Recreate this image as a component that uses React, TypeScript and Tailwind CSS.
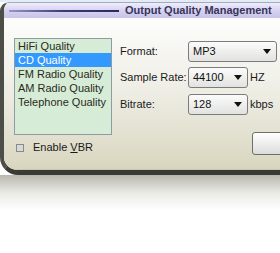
import React from "react";

const Arrow = () => (
  <svg width="8" height="5" viewBox="0 0 8 5" className="shrink-0">
    <path d="M0 0 L8 0 L4 5 Z" fill="#111" />
  </svg>
);

const Drop = ({ value, w }: { value: string; w: string }) => (
  <div
    className={`${w} h-[21px] flex items-center justify-between pl-[4px] pr-[5px] rounded-[3px] border border-[#7c7c7c] bg-gradient-to-b from-[#fbfbfb] to-[#e2e2e0] text-[11px] text-[#111]`}
  >
    <span>{value}</span>
    <Arrow />
  </div>
);

export default function App() {
  const items = ["HiFi Quality", "CD Quality", "FM Radio Quality", "AM Radio Quality", "Telephone Quality"];
  return (
    <div
      className="w-[280px] h-[253px] overflow-hidden bg-white"
      style={{ fontFamily: '"Liberation Sans", Arial, sans-serif' }}
    >
      <div className="h-[2px] bg-[#e2ecf5]" />
      <div className="w-[320px] rounded-tl-[9px] rounded-bl-[18px] border-l-[4px] border-l-[#4e4e49] border-b-[5px] border-b-[#3b3a35] border-t border-t-[#a9a8c4] overflow-hidden">
        <div className="h-[15px] flex items-center bg-gradient-to-b from-[#efeefa] via-[#d6d2f0] to-[#c9c4e8]">
          <div className="w-[110px] ml-[5px] h-[2px] bg-gradient-to-r from-[#9a96c8] via-[#3c3872] to-[#2e2a60]" />
          <span className="ml-[6px] text-[11px] font-bold text-[#37355a] whitespace-nowrap leading-none">
            Output Quality Management
          </span>
        </div>
        <div className="h-[152px] flex flex-col bg-gradient-to-b from-[#fdfdfc] via-[#eeede4] to-[#d9d6bf] border-b border-b-[#c9c6b0]">
          <div className="flex pl-[10px] pt-[20px]">
            <div className="flex flex-col">
              <div className="w-[98px] h-[97px] border border-[#8e9ba3] bg-[#d6ecd6]">
                {items.map((t, i) => (
                  <div
                    key={t}
                    className={
                      i === 1
                        ? "h-[14px] leading-[14px] pl-[3px] text-[11px] bg-[#3399ff] text-white whitespace-nowrap"
                        : "h-[14px] leading-[14px] pl-[3px] text-[11px] text-[#2a2a1c] whitespace-nowrap"
                    }
                  >
                    {t}
                  </div>
                ))}
              </div>
              <div className="flex items-center mt-[7px] ml-[2px]">
                <div className="w-[8px] h-[8px] border border-[#8a8a8a] bg-[#d8d8d8]" />
                <span className="ml-[9px] text-[11px] text-[#1a1a1a] leading-none">
                  Enable <span className="underline">V</span>BR
                </span>
              </div>
            </div>
            <div className="flex flex-col ml-[8px] pt-[3px]">
              <div className="flex items-center h-[21px]">
                <span className="w-[68px] text-[11px] text-[#1a1a1a]">Format:</span>
                <Drop value="MP3" w="w-[89px]" />
              </div>
              <div className="flex items-center h-[21px] mt-[5px]">
                <span className="w-[68px] text-[11px] text-[#1a1a1a]">Sample Rate:</span>
                <Drop value="44100" w="w-[60px]" />
                <span className="ml-[2px] text-[11px] text-[#1a1a1a]">HZ</span>
              </div>
              <div className="flex items-center h-[22px] mt-[5px]">
                <span className="w-[68px] text-[11px] text-[#1a1a1a]">Bitrate:</span>
                <Drop value="128" w="w-[60px]" />
                <span className="ml-[2px] text-[11px] text-[#1a1a1a]">kbps</span>
              </div>
              <div className="mt-[17px] ml-[132px] w-[80px] h-[23px] rounded-[3px] border border-[#6e6e6e] bg-gradient-to-b from-[#ffffff] to-[#dcdcdc]" />
            </div>
          </div>
        </div>
      </div>
      <div className="h-[36px] bg-gradient-to-b from-[#b8b8b0] via-[#ebebe6] to-white" />
    </div>
  );
}
